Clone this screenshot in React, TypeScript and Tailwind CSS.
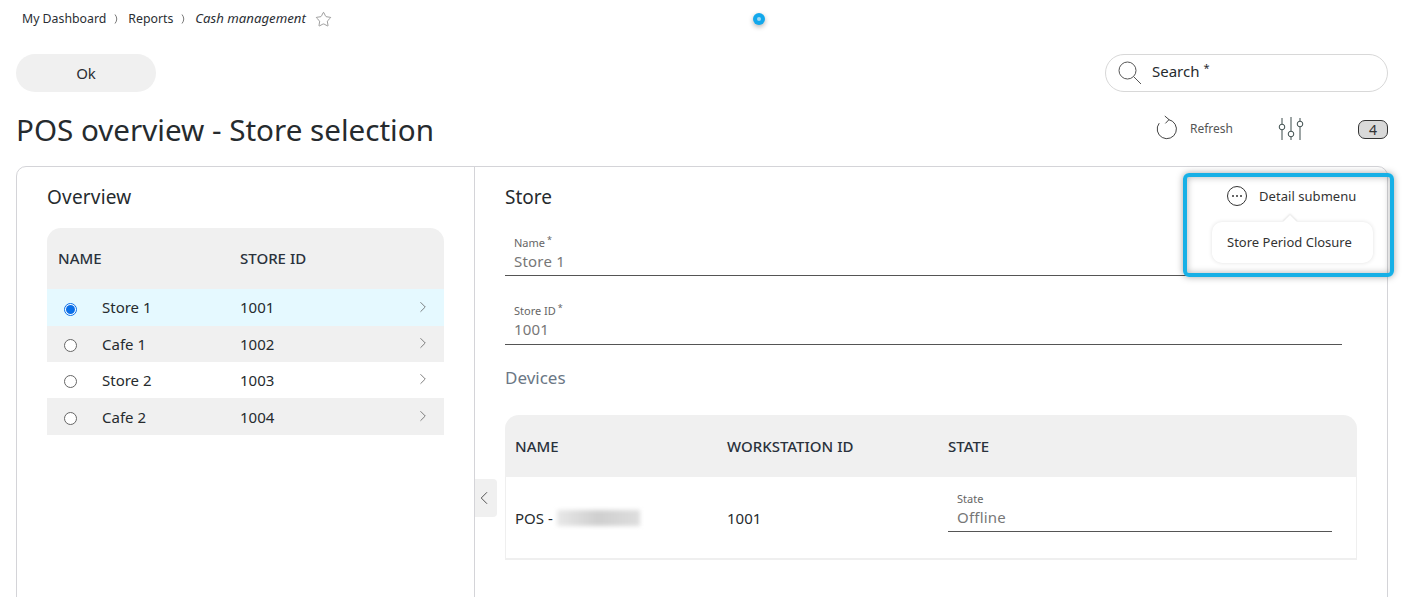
import { ChevronLeft, ChevronRight, Star } from 'lucide-react';

const stores = [
  { name: 'Store 1', id: '1001', selected: true, rowClass: 'h-[37px] bg-[#e5f9ff]' },
  { name: 'Cafe 1', id: '1002', selected: false, rowClass: 'h-[36px] bg-[#f0f0f0]' },
  { name: 'Store 2', id: '1003', selected: false, rowClass: 'h-[36px] bg-white' },
  { name: 'Cafe 2', id: '1004', selected: false, rowClass: 'h-[37px] bg-[#f0f0f0] pt-[1px]' },
];

function BreadcrumbSep() {
  return (
    <svg width="6" height="12" viewBox="0 0 6 12" fill="none" stroke="#555" strokeWidth="0.8" className="mx-[8px]">
      <path d="M1 1.5 Q4.5 6 1 10.5" />
    </svg>
  );
}

function SearchIcon() {
  return (
    <svg width="24" height="24" viewBox="0 0 24 24" fill="none" stroke="#555" strokeWidth="1">
      <circle cx="9.5" cy="9.5" r="8.5" />
      <path d="M15.6 15.6 L23 23" />
    </svg>
  );
}

function RefreshIcon() {
  return (
    <svg width="24" height="26" viewBox="0 0 24 26" fill="none" stroke="#444" strokeWidth="1" className="mb-[2px]">
      <path d="M14.5 4.6 A9.6 9.6 0 1 1 5.2 8.2" />
      <path d="M10.8 1 L15 4.6 L11.4 8.4" />
    </svg>
  );
}

function SlidersIcon() {
  return (
    <svg width="26" height="26" viewBox="0 0 26 26" fill="none" stroke="#3d4d4d" strokeWidth="1">
      <path d="M4 2v6M4 14v10M13 1v14M13 21v3M22 2v3M22 11v13" />
      <circle cx="4" cy="11" r="2.8" />
      <circle cx="13" cy="18" r="2.8" />
      <circle cx="22" cy="8" r="2.8" />
    </svg>
  );
}

function Field({ label, value, required, className }: { label: string; value: string; required?: boolean; className?: string }) {
  return (
    <div className={`border-b border-[#555] ${className ?? ''}`}>
      <div className="pl-[9px] text-[11px] leading-[14px] text-[#666]">
        {label}
        {required && <sup className="ml-[2px] text-[9px]">*</sup>}
      </div>
      <div className="pl-[9px] text-[15px] leading-[22px] tracking-[0.2px] text-[#777]">{value}</div>
    </div>
  );
}

export default function App() {
  return (
    <div className="relative h-screen overflow-hidden bg-white text-[#262b2e]" style={{ fontFamily: '"Noto Sans", sans-serif' }}>
      {/* Breadcrumb */}
      <div className="flex h-[38px] items-center pl-[22px] text-[12.3px] text-[#2a2e33]">
        <span>My Dashboard</span>
        <BreadcrumbSep />
        <span>Reports</span>
        <BreadcrumbSep />
        <span className="text-[13.2px] italic">Cash management</span>
        <Star className="ml-[9px] h-[17px] w-[17px] text-[#555]" strokeWidth={0.8} />
      </div>
      <div className="absolute left-[753px] top-[13px] flex h-[12px] w-[12px] items-center justify-center rounded-full bg-[#12a8ec] shadow-[0_2px_5px_rgba(0,0,0,0.3)]">
        <div className="h-[4px] w-[4px] rounded-full bg-[#9fd8f2]" />
      </div>

      {/* Actions */}
      <div className="mt-[16px] flex items-center justify-between pl-[16px] pr-[17px]">
        <button className="h-[38px] w-[140px] rounded-full bg-[#f0f0f0] text-[15px] text-[#2a2e33]">Ok</button>
        <div className="flex h-[38px] w-[283px] items-center rounded-full border border-[#d8d8d8] pl-[12px]">
          <SearchIcon />
          <span className="mb-[3px] ml-[10px] text-[15px]">Search</span>
          <span className="mb-[10px] ml-[4px] text-[11px]">*</span>
        </div>
      </div>

      {/* Title row */}
      <div className="flex h-[74px] items-center justify-between pl-[16px] pr-[17px]">
        <h1 className="mt-[2px] text-[29.6px] font-normal leading-[40px] text-[#262b2e]">POS overview - Store selection</h1>
        <div className="flex items-center">
          <RefreshIcon />
          <span className="ml-[12px] text-[12px] text-[#555]">Refresh</span>
          <div className="ml-[45px]">
            <SlidersIcon />
          </div>
          <div className="ml-[54px] flex h-[19px] w-[30px] items-center justify-center rounded-[7px] border border-[#333] bg-[#d9d9d9] text-[14px] text-[#333]">
            4
          </div>
        </div>
      </div>

      {/* Main panel */}
      <div className="ml-[16px] mr-[17px] flex h-[480px] rounded-[10px] border border-[#d4d4d8]">
        <div className="relative w-[458px] shrink-0 border-r border-[#d4d4d8] pl-[30px] pr-[30px]">
          <h2 className="flex h-[61px] items-center text-[19px] font-normal tracking-[0.2px]">Overview</h2>
          <div className="w-[397px]">
            <div className="flex h-[61px] items-center rounded-t-[14px] bg-[#f0f0f0] text-[15px] font-medium text-[#2a323c]">
              <span className="w-[193px] pl-[11px]">NAME</span>
              <span>STORE ID</span>
            </div>
            {stores.map((s) => (
              <div key={s.id} className={`flex items-center text-[15px] ${s.rowClass}`}>
                <div className="flex w-[55px] pt-[3px] pl-[17px]">
                  {s.selected ? (
                    <div className="flex h-[13px] w-[13px] items-center justify-center rounded-full border border-[#0a6fe8] bg-white">
                      <div className="h-[9px] w-[9px] rounded-full bg-[#0a6fe8]" />
                    </div>
                  ) : (
                    <div className="h-[13px] w-[13px] rounded-full border border-[#666] bg-white" />
                  )}
                </div>
                <span className="w-[138px]">{s.name}</span>
                <span className="flex-1">{s.id}</span>
                <ChevronRight className="mb-[2px] mr-[12px] h-[18px] w-[18px] text-[#555]" strokeWidth={1} />
              </div>
            ))}
          </div>
          <button className="absolute left-[458px] top-[312px] flex h-[38px] w-[22px] items-center justify-center rounded-r-[4px] bg-[#f0f0f0]">
            <ChevronLeft className="mr-[4px] h-[22px] w-[22px] shrink-0 text-[#444]" strokeWidth={1} />
          </button>
        </div>

        <div className="flex-1 pl-[30px] pr-[30px]">
          <h2 className="flex h-[61px] items-center text-[19px] font-normal">Store</h2>
          <Field label="Name" value="Store 1" required className="mt-[8px] w-[837px] pb-[3px]" />
          <Field label="Store ID" value="1001" required className="mt-[28px] w-[837px] pb-[4px]" />
          <h3 className="mt-[20px] text-[17px] font-normal leading-[26px] text-[#6b7785]">Devices</h3>
          <div className="mt-[24px] w-[852px]">
            <div className="flex h-[62px] items-center rounded-t-[14px] bg-[#f0f0f0] text-[15px] font-medium text-[#2a323c]">
              <span className="w-[222px] pl-[10px]">NAME</span>
              <span className="w-[221px]">WORKSTATION ID</span>
              <span>STATE</span>
            </div>
            <div className="flex h-[83px] items-center border-x border-b-2 border-[#efefef] text-[15px]">
              <div className="flex w-[221px] items-center pl-[9px] pt-[1px]">
                <span>POS -</span>
                <div className="ml-[4px] h-[16px] w-[83px] bg-gradient-to-r from-[#e8e8e8] via-[#cfcfcf] to-[#dedede] blur-[2px]" />
              </div>
              <span className="w-[221px] pt-[1px]">1001</span>
              <Field label="State" value="Offline" className="mb-[11px] w-[384px] pb-[3px]" />
            </div>
          </div>
        </div>
      </div>

      {/* Highlighted submenu callout */}
      <div className="absolute left-[1183px] top-[173px] h-[104px] w-[211px] rounded-[6px] border-4 border-[#17b0e6] shadow-[0_0_7px_rgba(0,0,0,0.35),inset_0_0_7px_rgba(0,0,0,0.3)]">
        <div className="flex h-[38px] items-center pl-[40px]">
          <div className="flex h-[20px] w-[20px] items-center justify-center gap-[2px] rounded-full border border-[#333]">
            <span className="h-[2px] w-[2px] rounded-full bg-[#333]" />
            <span className="h-[2px] w-[2px] rounded-full bg-[#333]" />
            <span className="h-[2px] w-[2px] rounded-full bg-[#333]" />
          </div>
          <span className="ml-[12px] mt-[1px] text-[13px] tracking-[0.05px] text-[#333]">Detail submenu</span>
        </div>
        <div className="relative ml-[25px] mt-[7px] flex h-[41px] w-[161px] items-center rounded-[10px] bg-white pl-[15px] text-[13px] text-[#333] shadow-[0_0_4px_rgba(0,0,0,0.12)]">
          Store Period Closure
          <div className="absolute left-[73px] top-[-5px] h-[10px] w-[10px] rotate-45 bg-white shadow-[-1px_-1px_2px_rgba(0,0,0,0.1)] [clip-path:polygon(-50%_-50%,100%_-50%,100%_0,0_100%,-50%_100%)]" />
        </div>
      </div>
    </div>
  );
}
